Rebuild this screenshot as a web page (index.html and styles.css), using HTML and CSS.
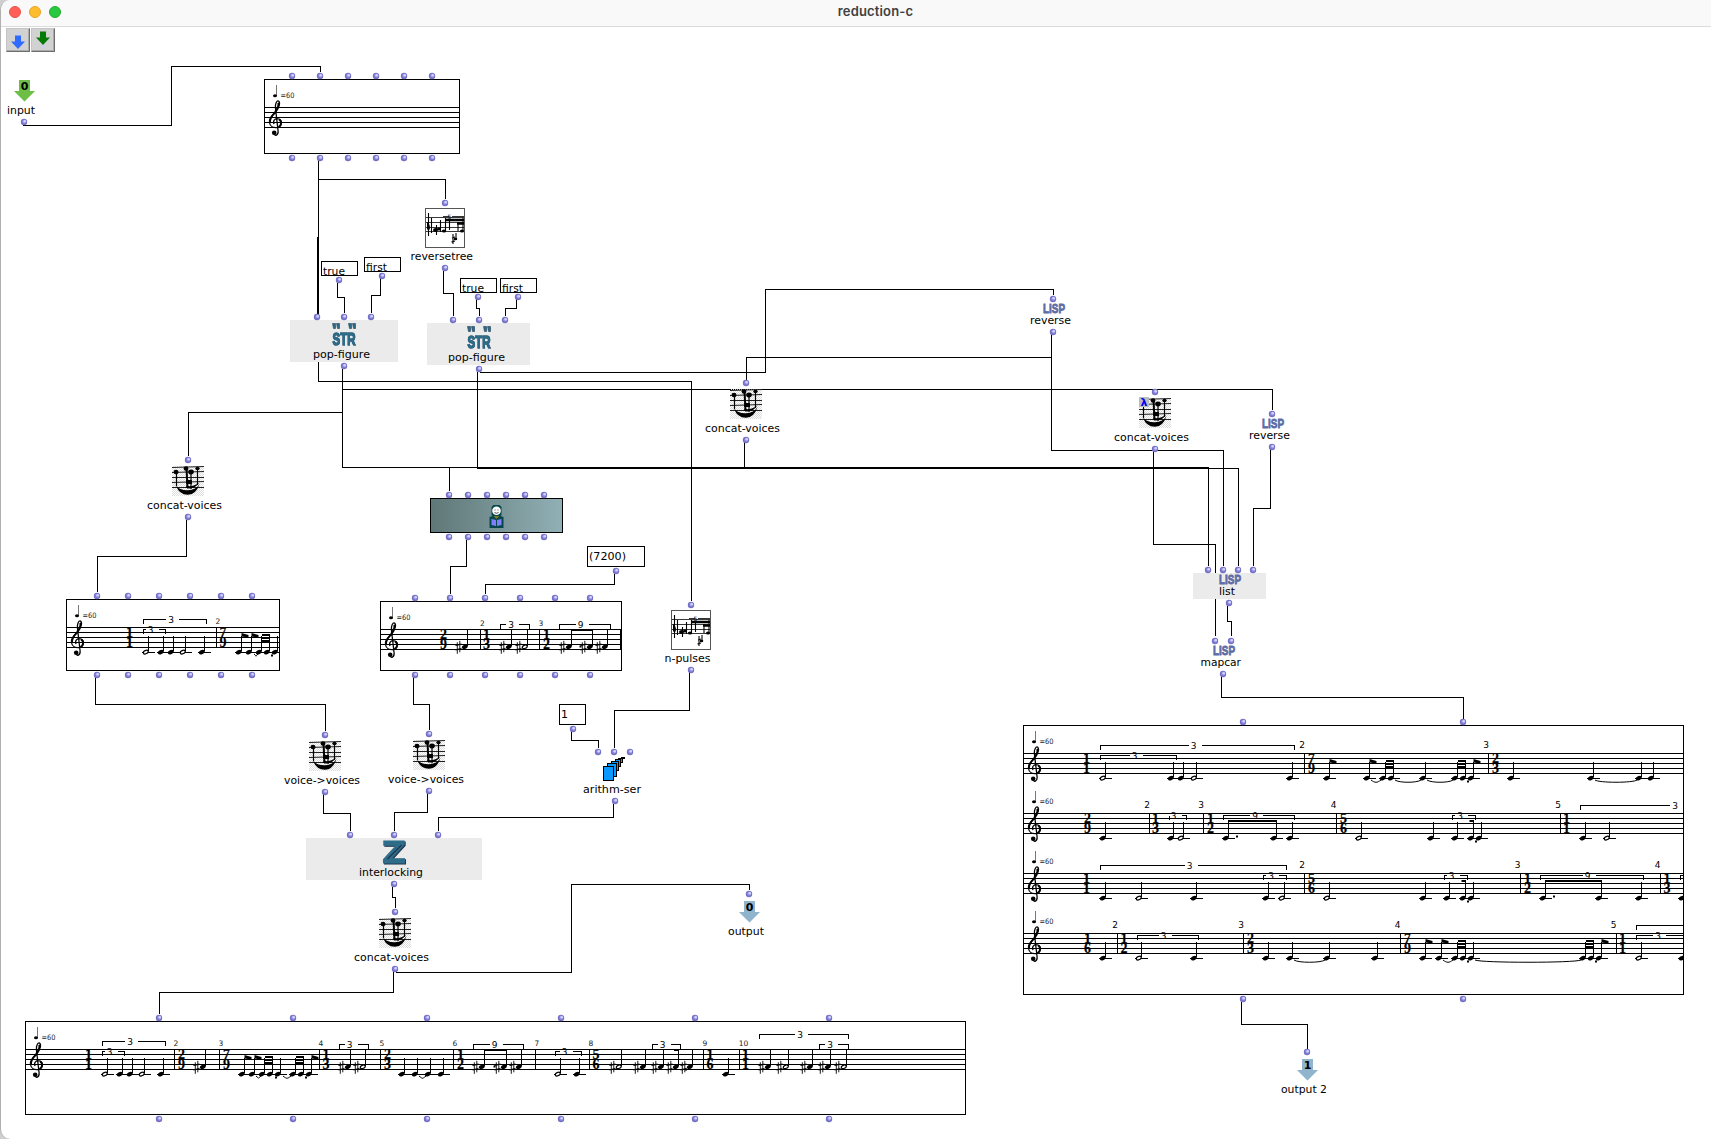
FILE: index.html
```html
<!DOCTYPE html>
<html lang="en">
<head>
<meta charset="utf-8">
<title>reduction-c</title>
<link rel="stylesheet" href="styles.css">
</head>
<body>
<main class="window">
  <header class="titlebar">
    <span class="light close"></span><span class="light minimize"></span><span class="light zoom"></span>
    <h1 class="title">reduction-c</h1>
  </header>
  <section class="patch">
    <nav class="toolbar">
      <button class="tool" aria-label="Add input"><svg width="22" height="22"><circle cx="11" cy="4" r="1.5" fill="#c9cdf8"/><path d="M8 6.500h6v6h4l-7 7.500-7-7.500h4z" fill="#2f6bff"/></svg></button>
      <button class="tool" aria-label="Add output"><svg width="22" height="22"><path d="M8 2.500h6v6h4l-7 7.500-7-7.500h4z" fill="#067a06"/><circle cx="11" cy="17.500" r="1.500" fill="#c9cdf8"/></svg></button>
    </nav>
    <svg class="canvas" id="canvas" viewBox="0 27 1711 1112" width="1711" height="1112">
      <defs>
        <linearGradient id="maquette"><stop offset="0" stop-color="#5f7777"/><stop offset="1" stop-color="#91b0b5"/></linearGradient>
        <pattern id="dither" width="2" height="2" patternUnits="userSpaceOnUse"><rect width="1" height="1" fill="#ddd"/><rect x="1" y="1" width="1" height="1" fill="#ddd"/></pattern>
        <symbol id="port" overflow="visible"><circle r="3.200" fill="#7470c4"/><circle cx=".3" cy="-.3" r="2.100" fill="#8f8de0"/><circle cx=".7" cy="-.8" r="1.300" fill="#d2d2ff"/></symbol>
        <symbol id="clef" overflow="visible">
          <path d="M-1.500 26C-1 29 3 28 2.600 23.500L0 1C-.8-4 1.500-7 3-6.500C5-5 4 0 0 5C-4 8.500-6.500 11-6 15C-5.500 19-2 20.500 2 20C7 19 7 13 3.500 11.500C0 10.500-3 12.500-1.500 16.500" fill="none" stroke="#000" stroke-width="1.300"/>
          <path d="M2.500-4.500C4-2 2 1-.5 4.500M-.5 4.800C-3.500 8-6 11-5.500 15M3.500 12C6.500 13.500 6 18 3 19.500" fill="none" stroke="#000" stroke-width="1.800"/>
          <circle cx="-1.300" cy="25.300" r="2.300"/>
        </symbol>
        <symbol id="sharp" overflow="visible"><path d="M-1.200-4.500V7M1.300-6V5.500" stroke="#000" stroke-width=".9"/><path d="M-3-1.400L3-2.600M-3 3L3 1.800" stroke="#000" stroke-width="1.300"/></symbol>
        <symbol id="voices" overflow="visible">
          <rect y="1" width="32" height="30" fill="url(#dither)"/>
          <path d="M0 2.500L32 1.500M0 7.500L32 6.500M0 12.500H32M0 17.500L32 16.500M0 22.500H32" stroke="#222" stroke-width="1.100"/>
          <path d="M4.500 7V21M19 8V24M25.500 3V20" stroke="#000" stroke-width="1.200"/>
          <path d="M14.500 3L15.500 23" stroke="#000" stroke-width="2"/>
          <ellipse cx="4" cy="7" rx="2.500" ry="2.200"/><ellipse cx="14" cy="3.500" rx="2.400" ry="2.300"/><ellipse cx="19" cy="7" rx="2.800" ry="2.400"/><ellipse cx="25.500" cy="3.500" rx="2.200" ry="1.800"/>
          <path d="M14 15h6v4h-6zM14 20.500Q20 23 27 17.500Q24 24 15 23.500zM4 20.500Q7 29.800 16 29.800Q24 29.800 27.500 19Q24 25 16 25.200Q8 25.500 4 20.500z"/>
        </symbol>
        <symbol id="rhythm" overflow="visible">
          <rect x=".5" y=".5" width="39" height="39" fill="#fff" stroke="#555"/>
          <path d="M1 9.500H39M1 14.500H39M1 19.500H39M1 23.500H39" stroke="#222" stroke-width=".9"/>
          <path d="M3.500 5V28M6.500 10V25M11.500 17V27M15.500 12V24M20.500 10V23M24.500 11V22M33 14V23M38 10V23" stroke="#000" stroke-width="1.100"/>
          <path d="M20 12H39M32 15.500H39" stroke="#000" stroke-width="2.600"/><path d="M18 8.500h6M27 8.500h12" stroke="#333" stroke-width="1"/>
          <path d="M2 14q3 2 3 6q-1 4-3 1z"/><ellipse cx="10.500" cy="22" rx="2.500" ry="2"/><ellipse cx="14" cy="21" rx="2" ry="1.500"/><ellipse cx="19" cy="23" rx="2.200" ry="1.500"/><ellipse cx="37" cy="23" rx="2" ry="1.500"/>
          <path d="M28 26V36M31 25V31M27 30L30 29M26.500 34L30 33" stroke="#000" stroke-width="1.100"/><ellipse cx="30.500" cy="31" rx="1.800" ry="1.300"/><text x="22.500" y="11" class="tiny">5</text>
        </symbol>
        <symbol id="series" overflow="visible"><g fill="#0a98ff" stroke="#000" shape-rendering="crispEdges"><path d="M18.500.5h3v1h-3z"/><path d="M15.500 1.500h4v4h-4z"/><path d="M12.500 2.500h5v7h-5z"/><path d="M8.500 4.500h7v9h-7z"/><path d="M4.500 6.500h9v13h-9z"/><path d="M.5 9.500h10v14H.5z"/></g></symbol>
        <symbol id="reader" overflow="visible">
          <path d="M4 0h6l2 2v8l-1 1 3 1v11H0V12l3-1-1-1V2z" fill="#06474c"/><circle cx="7" cy="5.800" r="4.300" fill="#fff"/>
          <path d="M5 5h1M8 5h1M5 7.500q2 1.500 4 0" stroke="#222" fill="none" stroke-width=".8"/><path d="M4 11h6l-3 3z" fill="#7d7a26"/>
          <path d="M2 14l4.500 1v6L2 20zM12 14l-4.500 1v6L12 20z" fill="#8080ff"/>
        </symbol>
      </defs>
    </svg>
  </section>
</main>
<script src="script.js"></script>
</body>
</html>
```
FILE: styles.css
```css
* { box-sizing: border-box; }
body { margin: 0; background: #cfcfcf; font-family: "DejaVu Sans", Verdana, sans-serif; overflow: hidden; }
.window { width: 1711px; height: 1139px; background: #fff; border-left: 1px solid #b0b0b0; border-radius: 10px 0 0 10px; overflow: hidden; }
.titlebar { display: flex; align-items: center; gap: 8px; height: 27px; padding: 0 9px 3px 8px; background: #f9f9f9; border-bottom: 1px solid #dcdcdc; }
.light { width: 12px; height: 12px; border-radius: 50%; border: 1px solid; }
.close { background: #ff5f57; border-color: #e9504a; }
.minimize { background: #febc2e; border-color: #e5a524; }
.zoom { background: #28c840; border-color: #1fac33; }
.title { flex: 1; margin: 0; padding: 0 20px 2px 0; text-align: center; font: 600 13px/20px Inter, sans-serif; color: #404040; letter-spacing: .15px; }
.patch { position: relative; height: 1112px; }
.toolbar { position: absolute; left: 5px; top: 1px; display: flex; gap: 1px; }
.tool { width: 24px; height: 24px; padding: 0; display: flex; background: #d2d2d2; border: 1px solid; border-color: #c4c4c4 #6e6e6e #6e6e6e #c4c4c4; box-shadow: inset -1px -1px 0 #aaa; }
.canvas { display: block; margin-left: -1px; }
.wire { fill: none; stroke: #000; stroke-width: 1; shape-rendering: crispEdges; }
.frame { fill: #fff; stroke: #000; shape-rendering: crispEdges; }
.maquette { fill: url(#maquette); }
.fnbox { fill: #ebebeb; }
.label { font-size: 11px; fill: #000; }
.index { font-size: 11px; font-weight: 700; text-anchor: middle; }
.lisp { font: 700 13px "Liberation Sans", sans-serif; fill: #5d6ba6; stroke: #5d6ba6; stroke-width: .8px; }
.str { font: 700 17px "Liberation Sans", sans-serif; fill: #2e6d8a; stroke: #2e6d8a; stroke-width: 1px; filter: drop-shadow(.7px .7px 0 #1f3d55); }
.zed { font: 700 31px "DejaVu Sans", sans-serif; fill: #2e6d8a; stroke: #2e6d8a; stroke-width: 1px; filter: drop-shadow(1px 1px 0 #23364f); }
.slash { fill: none; stroke: #23364f; stroke-width: 1.200; }
.lambda { font: 700 11px "DejaVu Sans", sans-serif; fill: #00e; }
.tempo { font-size: 7.500px; fill: #222; }
.tiny { font-size: 6px; }
.meter { font: 700 14px "Liberation Serif", serif; text-anchor: middle; stroke: #000; stroke-width: .2px; }
.small { font-size: 7.500px; text-anchor: middle; fill: #222; }
.tuplet { font-size: 9px; text-anchor: middle; }
.tie { fill: none; stroke: #000; stroke-width: 1; }
.stem { stroke: #000; stroke-width: 1; shape-rendering: crispEdges; }
.pale { stroke: #777; stroke-width: 1; shape-rendering: crispEdges; }
.open { fill: #fff; stroke: #000; stroke-width: 1.200; }
```
FILE: script.js
```javascript
const out = [];
const add = s => out.push(s);
const text = (cls, x, y, s, w) =>
  add(`<text class="${cls}" x="${x}" y="${y}"${w ? ` textLength="${w}" lengthAdjust="spacingAndGlyphs"` : ''}>${s.replace('>', '&gt;')}</text>`);
const use = (id, x, y) => add(`<use href="#${id}" x="${x}" y="${y}"/>`);
const rect = (cls, x1, y1, x2, y2) => add(`<rect class="${cls}" x="${x1}" y="${y1}" width="${x2 - x1}" height="${y2 - y1}"/>`);
const ports = (y, ...xs) => xs.forEach(x => use('port', x, y));
const path = (cls, d) => add(`<path class="${cls}" d="${d}"/>`);

/* Connections between boxes */
[
  'M23 125.5H171.5V66.5H320.5V72', 'M318.5 160V315M317.5 237V315M318.5 179.5H445.5V199',
  'M318.5 362V381.5H691.5V601', 'M337.5 283V297.5H344.5V313', 'M380.5 278V295.5H371.5V313',
  'M443.5 271V293.5H453.5V316', 'M476.5 299V308.5H479.5V316', 'M516.5 299V308.5H505.5V316',
  'M342.5 369V467.5H1208.5V566M342.5 389.5H1272.5V410M342.5 412.5H188.5V456M449.5 467.5V491',
  'M477.5 372V468.5H1238.5V566M480 372.5H765.5V289.5H1053.5V295',
  'M1051.5 334V450.5H1223.5V566M1051.5 357.5H746.5V380', 'M744.5 442V467.5',
  'M186.5 520V556.5H97.5V592', 'M95.5 677V704.5H325.5V731', 'M413.5 677V704.5H429.5V730',
  'M466.5 540V566.5H450.5V594', 'M614.5 574V584.5H485.5V594', 'M689.5 672V710.5H614.5V748',
  'M571.5 731V740.5H598.5V748', 'M613.5 804V817.5H438.5V831', 'M323.5 794V813.5H350.5V831',
  'M427.5 793V812.5H394.5V831', 'M392.5 887V897.5H395.5V908', 'M393.5 971V992.5H159.5V1014',
  'M396 972.5H571.5V884.5H749.5V890', 'M1153.5 451V544.5H1215.5V636', 'M1270.5 449V508.5H1253.5V566',
  'M1227.5 606V621.5H1231.5V636', 'M1221.5 676V697.5H1463.5V719', 'M1241.5 1002V1024.5H1307.5V1049'
].forEach(d => path('wire', d));

/* Input and output arrows */
const arrow = (x, y, color, n) => {
  add(`<path fill="${color}" d="M${x - 5} ${y}h11v11h5L${x + .5} ${y + 21.5}L${x - 10} ${y + 11}h5z"/>`);
  text('index', x + .5, y + 10, n);
};
arrow(24, 80, '#6dbe45', '0'); text('label', 7, 114, 'input', 28); ports(122, 24);
arrow(749, 901, '#8fb4cc', '0'); text('label', 728, 935, 'output', 36); ports(894, 749);
arrow(1307, 1059, '#8fb4cc', '1'); text('label', 1281, 1093, 'output 2', 46); ports(1052, 1307);

/* Constants */
[[321.5, 261.5, 357.5, 275.5, 'true', 22, 274.5, 339, 280], [364.5, 257.5, 400.5, 271.5, 'first', 21, 270.5, 382, 276],
 [460.5, 278.5, 496.5, 292.5, 'true', 22, 291.5, 478, 297], [500.5, 278.5, 536.5, 292.5, 'first', 21, 291.5, 518, 297],
 [587.5, 546.5, 644.5, 566.5, '(7200)', 37, 560, 616, 571], [559.5, 704.5, 585.5, 724.5, '1', 0, 718, 573, 729]
].forEach(([x1, y1, x2, y2, s, w, base, px, py]) => { rect('frame', x1, y1, x2, y2); text('label', x1 + 1.5, base, s, w); ports(py, px); });

/* Function boxes */
rect('fnbox', 290, 320, 398, 362); rect('fnbox', 427, 323, 530, 365); rect('fnbox', 306, 838, 482, 880); rect('fnbox', 1193, 573, 1266, 599);
[[344, 320], [479, 323]].forEach(([x, y]) => {
  add(`<path fill="#2e6d8a" stroke="#1f3d55" stroke-width=".6" d="M${x - 11.5} ${y + 3.5}h3v5h-2zM${x - 7.5} ${y + 3.5}h3v5h-2zM${x + 4.5} ${y + 3.5}h3v5h-2zM${x + 8.5} ${y + 3.5}h3v5h-2z"/>`);
  text('str', x - 11.5, y + 24.5, 'STR', 23); text('label', x - 31, y + 38, 'pop-figure', 57); ports(y + 46, x);
});
ports(317, 317, 344, 371); ports(320, 453, 479, 505);
text('zed', 382, 863, 'Z', 24);
path('slash', 'M387.5 859L401.5 845'); text('label', 359, 876, 'interlocking', 64); ports(835, 350, 394, 438); ports(884, 394);

[[1053, 299, 'reverse', 1030, 41], [1272, 414, 'reverse', 1249, 41]].forEach(([x, y, s, lx, w]) => {
  text('lisp', x - 10, y + 13.5, 'LISP', 22); text('label', lx, y + 25, s, w); ports(y, x); ports(y + 33, x);
});
text('lisp', 1219, 583.5, 'LISP', 22); text('label', 1219, 595, 'list', 16); ports(570, 1208, 1223, 1238, 1253); ports(603, 1229);
text('lisp', 1213, 654.5, 'LISP', 22); text('label', 1200.5, 666, 'mapcar', 40.5); ports(641, 1215, 1231); ports(674, 1223);

[[188, 460, 'concat-voices'], [746, 383, 'concat-voices'], [1155, 392, 'concat-voices'], [395, 912, 'concat-voices'],
 [325, 735, 'voice->voices'], [429, 734, 'voice->voices']].forEach(([x, y, s]) => {
  use('voices', x - 16, y + 5); text('label', x - 41, y + 49, s, s[0] === 'c' ? 75 : 76); ports(y, x); ports(y + 57, x);
});
add('<rect x="1139" y="397" width="10" height="10" fill="#bcbcbc"/>'); text('lambda', 1140.5, 406, 'λ');

use('rhythm', 425, 208); text('label', 410.5, 260, 'reversetree', 62.5); ports(203, 445); ports(268, 445);
use('rhythm', 671, 610); text('label', 664.5, 662, 'n-pulses', 46); ports(605, 691); ports(670, 691);
use('series', 603, 757); text('label', 583, 793, 'arithm-ser', 58); ports(752, 598, 614, 630); ports(801, 615);

rect('frame maquette', 430.5, 498.5, 562.5, 532.5);
use('reader', 489.5, 505); ports(495, 449, 468, 487, 506, 525, 544); ports(537, 449, 468, 487, 506, 525, 544);

/* Score boxes. Each staff is a list of commands:
   T x n/d meter | B x [n nx] barline | q/h/e x note on C (quarter, half, flagged) | Q/H x note on F sharp
   p x x beamed pair | [ x1 x2 dy label lx tuplet | t x1 x2 tie | = x1 x2 dy beam | . x dy dot */
function staff(left, right, top, src, big) {
  for (let i = 0; i < 5; i++) path('wire', `M${left} ${top + 5 * i}H${right}`);
  use('clef', left + 11, top);
  path('pale', `M${left + 12} ${top - 23}V${top - 12}`);
  add(`<ellipse cx="${left + 10.5}" cy="${top - 11.8}" rx="2" ry="1.500"/>`);
  text('tempo', left + 16, top - 10, '=60', 14);
  const note = (x, sharp, open, flag) => {
    const y = top + (sharp ? 17.3 : 24.6);
    path('stem', `M${x} ${y - 1}V${top + (sharp ? 0 : 8)}`);
    if (!sharp) path('stem', `M${x - 7} ${top + 25}H${x + 6}`);
    add(`<ellipse ${open ? 'class="open"' : ''} cx="${x - 2.7}" cy="${y}" rx="${open ? 2.6 : 3.1}" ry="${open ? 1.6 : 2.1}" transform="rotate(-25 ${x - 2.7} ${y})"/>`);
    if (sharp) use('sharp', x - 9, y);
    if (flag) add(`<path d="M${x} ${top + 5.5}L${x + 7} ${top + 7.5}V${top + 10}L${x} ${top + 9}z"/>`);
  };
  src.split(';').forEach(cmd => {
    const [op, ...a] = cmd.trim().split(' '), n = a.map(Number);
    if (op === 'T') { const [u, d] = a[1].split('/'); text('meter', n[0], top + 9.6, u); text('meter', n[0], top + 19.8, d); }
    else if (op === 'B') {
      path('stem', `M${n[0]} ${top}V${top + 20}`);
      if (a[1]) text(big ? 'tuplet' : 'small', n[2], top - (big ? 5.5 : 3.5), a[1]);
    }
    else if ('qheQH'.includes(op)) n.forEach(x => note(x, op < 'a', op.toLowerCase() === 'h', op === 'e'));
    else if (op === 'p') { n.forEach(x => note(x)); [8, 11, 14].forEach((dy, i) => path('stem', `M${n[0]} ${top + dy}H${n[1]}${i !== 1 ? `M${n[0]} ${top + dy - 1}H${n[1]}` : ''}`)); }
    else if (op === '[') {
      const y = top + n[2], tail = Math.min(n[1], right), shown = n[4] < right;
      path('wire', `M${n[0]} ${y + 4}V${y}H${shown ? Math.max(n[0], n[4] - 5) : right}` + (n[4] + 8 < tail ? `M${n[4] + 8} ${y}H${tail}${n[1] <= right ? `V${y + 4}` : ''}` : ''));
      if (shown) text('tuplet', n[4], y + 3, a[3]);
    }
    else if (op === 't') { const k = n[1] - n[0] > 100 ? 6 : 4; path('tie', `M${n[0]} ${top + 26.5}C${n[0] + k} ${top + 29.5} ${n[1] - k} ${top + 29.5} ${n[1]} ${top + 26.5}`); }
    else if (op === '=') add(`<rect x="${n[0] - .5}" y="${top + n[2] - .5}" width="${n[1] - n[0] + 1}" height="2"/>`);
    else if (op === '.') add(`<rect x="${n[0] - 1}" y="${top + n[1] - 1}" width="2" height="2"/>`);
  });
}
function score(id, x1, y1, x2, y2, staves, big) {
  rect('frame', x1, y1, x2, y2);
  add(`<clipPath id="${id}"><rect x="${x1}" y="${y1}" width="${x2 - x1}" height="${y2 - y1}"/></clipPath><g clip-path="url(#${id})">`);
  staves.forEach(([top, src]) => staff(x1, x2, top, src, big));
  add('</g>');
  rect('wire', x1, y1, x2, y2);
}
score('s1', 264.5, 79.5, 459.5, 153.5, [[107.5, '']]);
[76, 158].forEach(y => ports(y, 292, 320, 348, 376, 404, 432));

score('s2', 66.5, 599.5, 279.5, 670.5, [[627.5,
  'T 129.5 1/1;[ 143.5 206.5 -8 3 171;[ 143.5 165.5 2 3 150.5;h 148.5;q 163.5 173.5;h 185.5;q 204.5;B 216.5 2 218;T 223 7/9;e 241.5 251.5;p 261.5 269.5;q 277.5;t 254 258;. 272 28']]);
[596, 675].forEach(y => ports(y, 97, 128, 159, 190, 221, 252));

score('s3', 380.5, 601.5, 621.5, 670.5, [[629.5,
  'T 443.5 2/9;Q 467.5;B 480.5 2 482.5;T 486.5 1/3;Q 511.5;H 527.5;[ 500.5 529.5 -5 3 511;B 539.5 3 541;T 546.5 1/2;Q 571.5 592.5 607.5;= 571.5 592.5 0;. 580.5 17;[ 559.5 610.5 -5 9 580.5;B 620.5']]);
[598, 675].forEach(y => ports(y, 415, 450, 485, 520, 555, 590));

score('s4', 25.5, 1021.5, 965.5, 1114.5, [[1049.5,
  'T 88.5 1/1;[ 102.5 165.5 -8 3 130;[ 102.5 124.5 2 3 109.5;h 107.5;q 122.5 132.5;h 144.5;q 163.5;B 174.5 2 176;T 181.5 2/9;Q 205.5;B 219.5 3 221;T 226.5 7/9;' +
  'e 244.5 254.5;p 264.5 272.5;q 280.5;p 295.5 303.5;e 311.5;t 256 261;t 283 291;. 276 28;. 306 28;B 319.5 4 321;T 326 1/3;Q 350.5;H 365.5;[ 339.5 368.5 -5 3 349.5;' +
  'B 380.5 5 382;T 387.5 2/3;q 404.5 417.5 430.5 443.5;t 419 426;B 453.5 6 455;T 460.5 1/2;Q 484.5 506.5 521.5;= 484.5 506.5 0;. 494.5 17;[ 473.5 523.5 -5 9 494.5;' +
  'B 535.5 7 537;h 560.5;q 579.5;[ 555.5 581.5 2 3 564.5;B 589.5 8 591;T 596 5/6;H 621.5;Q 645.5 663.5 678.5 692.5;[ 652.5 680.5 -5 3 662.5;= 674.5 678.5 0;. 686 20;' +
  'B 703.5 9 705;T 710 1/6;q 728.5;B 739.5 10 743.5;T 745.5 1/1;Q 770.5;H 788.5;Q 812.5 830.5;H 846.5;[ 759.5 848.5 -15 3 800;[ 819.5 848.5 -5 3 830']]);
[1018, 1119].forEach(y => ports(y, 159, 293, 427, 561, 695, 829));

score('s5', 1023.5, 725.5, 1683.5, 994.5, [
  [753.5, 'T 1086.5 1/1;h 1105.5;q 1173.5 1183.5;h 1196.5;q 1292.5;[ 1100.5 1294.5 -8 3 1193.5;[ 1100.5 1176.5 2 3 1134.5;B 1304.5 2 1302;T 1311.5 7/9;e 1329.5 1369.5;p 1385.5 1393.5;q 1425.5;p 1457.5 1465.5;e 1473.5;t 1371 1381;t 1395 1421;t 1427 1453;. 1468 28;B 1488.5 3 1486;T 1495.5 2/3;q 1513.5 1593.5 1641.5 1653.5;t 1595 1637'],
  [813.5, 'T 1087.5 2/9;q 1105.5;B 1149.5 2 1147;T 1155.5 1/3;q 1173.5;h 1183.5;[ 1169.5 1186.5 2 3 1173.5;B 1203.5 3 1201;T 1210.5 1/2;q 1228.5 1276.5 1292.5;. 1237 23;= 1228.5 1276.5 7;[ 1223.5 1294.5 2 9 1255;B 1336.5 4 1333.5;T 1343.5 5/6;h 1361.5;q 1433.5 1457.5 1473.5 1481.5;[ 1452.5 1475.5 2 3 1460;= 1470 1473.5 7;. 1476 28;B 1560.5 5 1558;T 1566.5 1/1;q 1585.5;h 1609.5;[ 1580.5 1770 -8 3 1675'],
  [873.5, 'T 1086.5 1/1;q 1105.5;h 1141.5;q 1196.5 1268.5;h 1284.5;[ 1100.5 1286.5 -8 3 1189.5;[ 1263.5 1286.5 2 3 1271;B 1304.5 2 1302;T 1311.5 5/6;h 1329.5;q 1425.5 1449.5 1465.5 1473.5;[ 1444.5 1467.5 2 3 1451.5;= 1462 1465.5 7;. 1468 28;B 1520.5 3 1517.5;T 1527.5 1/2;q 1545.5 1601.5 1641.5;. 1554 23;= 1545.5 1601.5 7;[ 1540.5 1643.5 2 9 1587.5;B 1660.5 4 1657.5;T 1667 1/3;[ 1680.5 1710 2 3 1700;q 1684.5'],
  [933.5, 'T 1087.5 1/6;q 1105.5;B 1117.5 2 1115;T 1124 1/2;h 1141.5;q 1196.5;[ 1137.5 1198.5 2 3 1163.5;B 1243.5 3 1241;T 1250.5 2/3;q 1268.5 1292.5 1329.5;t 1294 1325;q 1377.5;B 1400.5 4 1397.5;T 1407.5 7/9;e 1425.5 1441.5;p 1457.5 1465.5;q 1473.5;t 1443 1453;. 1468 28;t 1475 1581;p 1585.5 1593.5;e 1601.5;. 1596 28;B 1616.5 5 1613.5;T 1622.5 1/1;h 1641.5;[ 1636.5 1770 -8 3 1710;[ 1636.5 1710 2 3 1658;q 1684.5']
], true);
[722, 999].forEach(y => ports(y, 1243, 1463));

document.getElementById('canvas').insertAdjacentHTML('beforeend', out.join(''));
```
